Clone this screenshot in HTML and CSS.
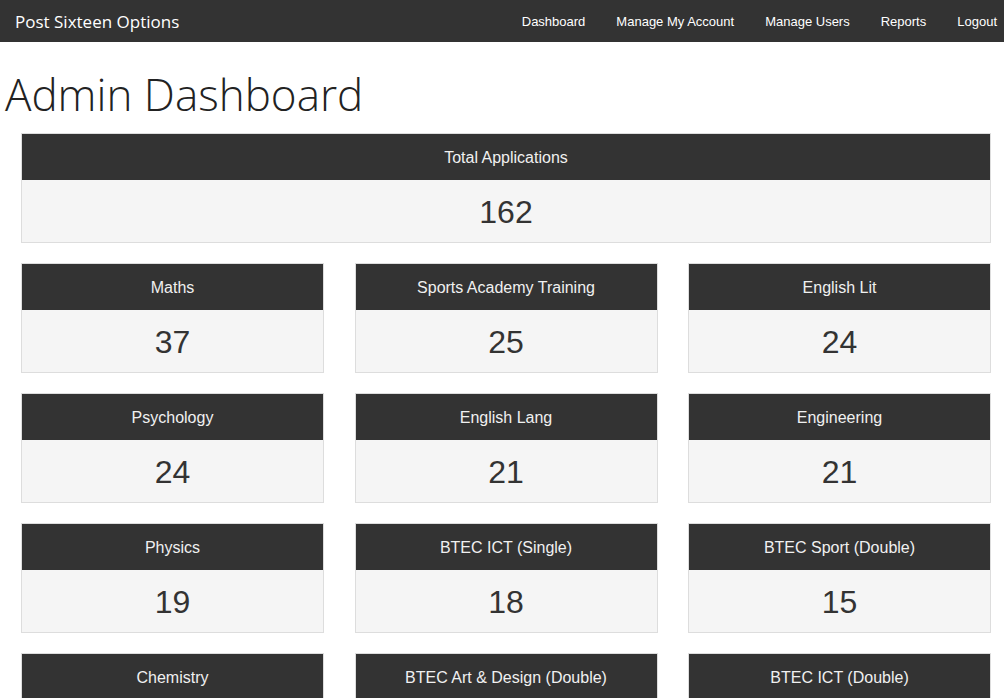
FILE: index.html
```html
<!DOCTYPE html>
<html lang="en">
<head>
<meta charset="utf-8">
<title>Admin Dashboard</title>
<link rel="stylesheet" href="styles.css">
</head>
<body>
<nav class="navbar">
  <a class="brand" href="#">Post Sixteen Options</a>
  <ul class="nav-links">
    <li><a href="#">Dashboard</a></li>
    <li><a href="#">Manage My Account</a></li>
    <li><a href="#">Manage Users</a></li>
    <li><a href="#">Reports</a></li>
    <li><a href="#">Logout</a></li>
  </ul>
</nav>
<h1 class="page-title">Admin Dashboard</h1>
<main class="content">
  <div class="card card-total">
    <div class="card-head">Total Applications</div>
    <div class="card-body">162</div>
  </div>
  <div class="grid">
    <div class="card"><div class="card-head">Maths</div><div class="card-body">37</div></div>
    <div class="card"><div class="card-head">Sports Academy Training</div><div class="card-body">25</div></div>
    <div class="card"><div class="card-head">English Lit</div><div class="card-body">24</div></div>
    <div class="card"><div class="card-head">Psychology</div><div class="card-body">24</div></div>
    <div class="card"><div class="card-head">English Lang</div><div class="card-body">21</div></div>
    <div class="card"><div class="card-head">Engineering</div><div class="card-body">21</div></div>
    <div class="card"><div class="card-head">Physics</div><div class="card-body">19</div></div>
    <div class="card"><div class="card-head">BTEC ICT (Single)</div><div class="card-body">18</div></div>
    <div class="card"><div class="card-head">BTEC Sport (Double)</div><div class="card-body">15</div></div>
    <div class="card"><div class="card-head">Chemistry</div><div class="card-body">14</div></div>
    <div class="card"><div class="card-head">BTEC Art &amp; Design (Double)</div><div class="card-body">14</div></div>
    <div class="card"><div class="card-head">BTEC ICT (Double)</div><div class="card-body">13</div></div>
  </div>
</main>
</body>
</html>
```

FILE: styles.css
```css
* { box-sizing: border-box; }
html, body { margin: 0; padding: 0; background: #fff; }
body { font-family: "Liberation Sans", Arial, sans-serif; color: #333; }

.navbar {
  height: 42px;
  background: #333;
  display: flex;
  align-items: center;
  justify-content: space-between;
  padding: 0 7px 0 15px;
}
.brand {
  font-family: "Open Sans", sans-serif;
  font-size: 17px;
  color: #fff;
  text-decoration: none;
}
.nav-links {
  list-style: none;
  margin: 0;
  padding: 0;
  display: flex;
  gap: 31px;
}
.nav-links a {
  color: #fff;
  font-size: 13px;
  text-decoration: none;
}

.page-title {
  font-family: "Open Sans", sans-serif;
  font-weight: 300;
  font-size: 44px;
  line-height: 44px;
  height: 44px;
  margin: 30px 0 17px 5px;
  color: #222;
}

.content {
  width: 970px;
  margin-left: 21px;
}
.grid {
  display: grid;
  grid-template-columns: repeat(3, 1fr);
  column-gap: 30.5px;
  row-gap: 20px;
  margin-top: 20px;
}
.card {
  border: 1px solid #ddd;
  background: #f5f5f5;
}
.card-head {
  height: 46px;
  padding-top: 2px;
  background: #333;
  color: #f0f0f0;
  font-size: 16px;
  display: flex;
  align-items: center;
  justify-content: center;
}
.card-body {
  height: 62px;
  padding-top: 2px;
  font-size: 32px;
  color: #333;
  display: flex;
  align-items: center;
  justify-content: center;
}
```
